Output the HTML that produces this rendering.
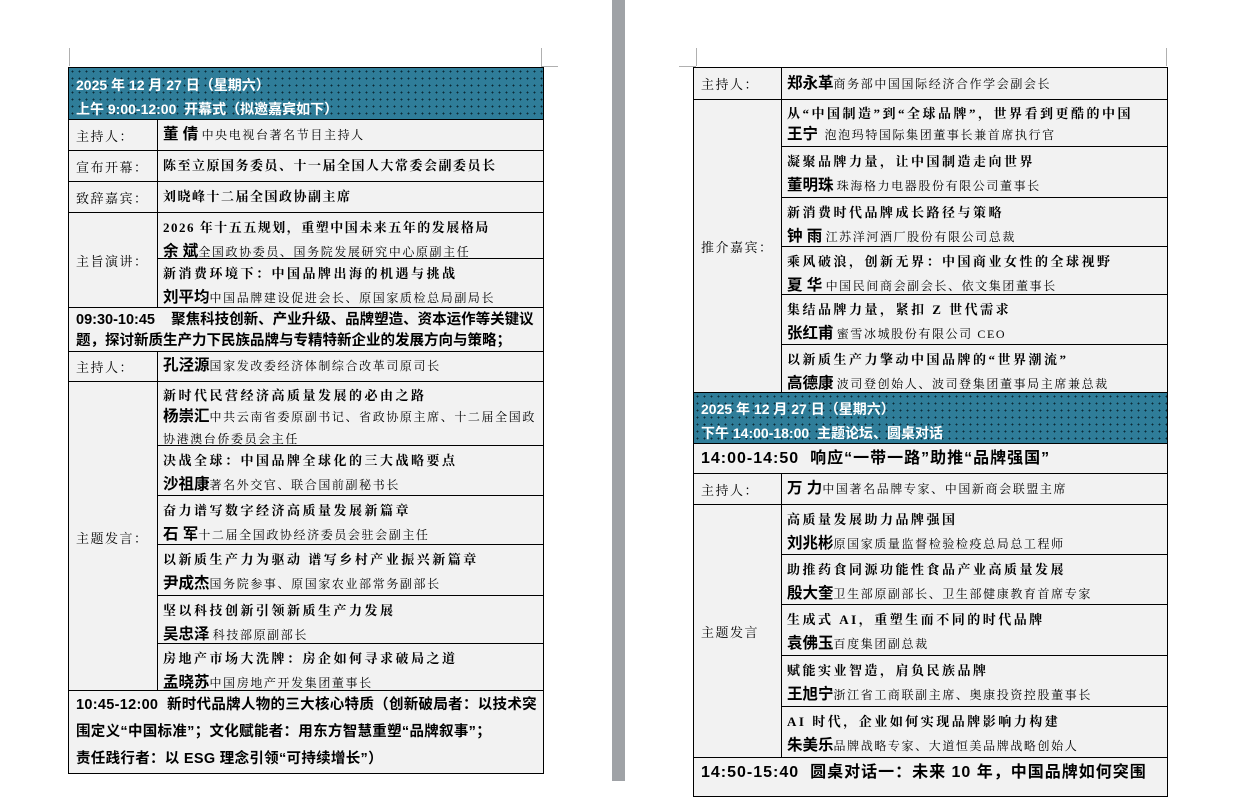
<!DOCTYPE html>
<html><head><meta charset="utf-8"><style>
body{margin:0;width:1239px;height:781px;background:#fff;position:relative;overflow:hidden;font-family:"Liberation Serif","Noto Serif CJK SC",serif;color:#000}
.c{position:absolute;box-sizing:border-box;border:1px solid #000;background:#f2f2f2;}
.h{background-color:#2f7d99;background-image:radial-gradient(circle,#0b2a36 0.8px,transparent 1px);background-size:7px 7px;color:#fff;font-family:"Liberation Sans","Noto Sans CJK SC",sans-serif;font-weight:bold;font-size:14px;padding:5px 0 0 7px;line-height:24px}
.lab{font-size:13px;padding-left:7px;display:flex;align-items:center;letter-spacing:1.5px}
.ct{padding:3px 0 0 5px;font-size:13px;line-height:24px;white-space:nowrap}
.t{font-weight:bold;letter-spacing:2.5px}
.t2{font-weight:bold;letter-spacing:1.5px}
.n{font-weight:bold;font-size:15.5px;font-family:"Liberation Sans","Noto Sans CJK SC",sans-serif}
.d{font-size:12px;letter-spacing:1.6px}
.big{font-family:"Liberation Sans","Noto Sans CJK SC",sans-serif;font-weight:bold;font-size:14.5px;padding:4px 0 0 7px;line-height:24px;white-space:nowrap}
.gap{position:absolute;left:612px;top:0;width:13px;height:781px;background:#9fa2a6}
.mk{position:absolute;background:#b0b0b0}
</style></head><body>
<div class="gap"></div>
<div class="mk" style="left:541px;top:48px;width:1px;height:18px"></div>
<div class="mk" style="left:541px;top:66px;width:17px;height:1px"></div>
<div class="mk" style="left:69px;top:48px;width:1px;height:18px"></div>
<div class="mk" style="left:696px;top:48px;width:1px;height:18px"></div>
<div class="mk" style="left:679px;top:66px;width:17px;height:1px"></div>
<div class="mk" style="left:1166px;top:48px;width:1px;height:18px"></div>

<!-- LEFT PAGE -->
<div class="c h" style="left:68px;top:67px;width:476px;height:53px">2025 年 12 月 27 日（星期六）<br>上午 9:00-12:00&nbsp; 开幕式（拟邀嘉宾如下）</div>
<div class="c lab" style="left:68px;top:119px;width:90px;height:32px">主持人：</div>
<div class="c ct" style="left:157px;top:119px;width:387px;height:32px;padding-top:4px;line-height:22px"><span class="n">董 倩</span> <span class="d">中央电视台著名节目主持人</span></div>
<div class="c lab" style="left:68px;top:150px;width:90px;height:32px">宣布开幕：</div>
<div class="c ct" style="left:157px;top:150px;width:387px;height:32px;padding-top:4px;line-height:22px"><span class="t2">陈至立原国务委员、十一届全国人大常委会副委员长</span></div>
<div class="c lab" style="left:68px;top:181px;width:90px;height:32px">致辞嘉宾：</div>
<div class="c ct" style="left:157px;top:181px;width:387px;height:32px;padding-top:4px;line-height:22px"><span class="t2">刘晓峰十二届全国政协副主席</span></div>
<div class="c lab" style="left:68px;top:212px;width:90px;height:96px">主旨演讲：</div>
<div class="c ct" style="left:157px;top:212px;width:387px;height:47px"><span class="t2">2026 年十五五规划，重塑中国未来五年的发展格局</span><br><span class="n">余 斌</span><span class="d">全国政协委员、国务院发展研究中心原副主任</span></div>
<div class="c ct" style="left:157px;top:258px;width:387px;height:50px"><span class="t">新消费环境下：中国品牌出海的机遇与挑战</span><br><span class="n">刘平均</span><span class="d">中国品牌建设促进会长、原国家质检总局副局长</span></div>
<div class="c big" style="left:68px;top:307px;width:476px;height:45px;line-height:21px;padding-top:2px;letter-spacing:0">09:30-10:45&nbsp;&nbsp;&nbsp; 聚焦科技创新、产业升级、品牌塑造、资本运作等关键议<br>题，探讨新质生产力下民族品牌与专精特新企业的发展方向与策略；</div>
<div class="c lab" style="left:68px;top:351px;width:90px;height:31px">主持人：</div>
<div class="c ct" style="left:157px;top:351px;width:387px;height:31px;padding-top:3px;line-height:22px"><span class="n">孔泾源</span><span class="d">国家发改委经济体制综合改革司原司长</span></div>
<div class="c lab" style="left:68px;top:381px;width:90px;height:310px;align-items:flex-start;padding-top:146px">主题发言：</div>
<div class="c ct" style="left:157px;top:381px;width:387px;height:65px;line-height:21px;white-space:normal"><span class="t">新时代民营经济高质量发展的必由之路</span><br><span class="n">杨崇汇</span><span class="d">中共云南省委原副书记、省政协原主席、十二届全国政协港澳台侨委员会主任</span></div>
<div class="c ct" style="left:157px;top:445px;width:387px;height:51px"><span class="t">决战全球：中国品牌全球化的三大战略要点</span><br><span class="n">沙祖康</span><span class="d">著名外交官、联合国前副秘书长</span></div>
<div class="c ct" style="left:157px;top:495px;width:387px;height:50px"><span class="t">奋力谱写数字经济高质量发展新篇章</span><br><span class="n">石 军</span><span class="d">十二届全国政协经济委员会驻会副主任</span></div>
<div class="c ct" style="left:157px;top:544px;width:387px;height:52px"><span class="t">以新质生产力为驱动 谱写乡村产业振兴新篇章</span><br><span class="n">尹成杰</span><span class="d">国务院参事、原国家农业部常务副部长</span></div>
<div class="c ct" style="left:157px;top:595px;width:387px;height:49px"><span class="t">坚以科技创新引领新质生产力发展</span><br><span class="n">吴忠泽</span> <span class="d">科技部原副部长</span></div>
<div class="c ct" style="left:157px;top:643px;width:387px;height:48px"><span class="t">房地产市场大洗牌：房企如何寻求破局之道</span><br><span class="n">孟晓苏</span><span class="d">中国房地产开发集团董事长</span></div>
<div class="c big" style="left:68px;top:690px;width:476px;height:84px;line-height:27px;padding-top:1px;letter-spacing:0.3px">10:45-12:00&nbsp; 新时代品牌人物的三大核心特质（创新破局者：以技术突<br>围定义“中国标准”；文化赋能者：用东方智慧重塑“品牌叙事”；<br>责任践行者：以 ESG 理念引领“可持续增长”）</div>

<!-- RIGHT PAGE -->
<div class="c lab" style="left:693px;top:67px;width:89px;height:33px">主持人：</div>
<div class="c ct" style="left:781px;top:67px;width:387px;height:33px;padding-top:5px;line-height:22px"><span class="n">郑永革</span><span class="d">商务部中国国际经济合作学会副会长</span></div>
<div class="c lab" style="left:693px;top:99px;width:89px;height:294px">推介嘉宾：</div>
<div class="c ct" style="left:781px;top:99px;width:387px;height:48px;line-height:21px"><span class="t">从“中国制造”到“全球品牌”，世界看到更酷的中国</span><br><span class="n">王宁</span>&nbsp; <span class="d">泡泡玛特国际集团董事长兼首席执行官</span></div>
<div class="c ct" style="left:781px;top:146px;width:387px;height:52px"><span class="t">凝聚品牌力量，让中国制造走向世界</span><br><span class="n">董明珠</span> <span class="d">珠海格力电器股份有限公司董事长</span></div>
<div class="c ct" style="left:781px;top:197px;width:387px;height:50px"><span class="t">新消费时代品牌成长路径与策略</span><br><span class="n">钟 雨</span> <span class="d">江苏洋河酒厂股份有限公司总裁</span></div>
<div class="c ct" style="left:781px;top:246px;width:387px;height:49px"><span class="t">乘风破浪，创新无界：中国商业女性的全球视野</span><br><span class="n">夏 华</span> <span class="d">中国民间商会副会长、依文集团董事长</span></div>
<div class="c ct" style="left:781px;top:294px;width:387px;height:51px"><span class="t">集结品牌力量，紧扣 Z 世代需求</span><br><span class="n">张红甫</span> <span class="d">蜜雪冰城股份有限公司 CEO</span></div>
<div class="c ct" style="left:781px;top:344px;width:387px;height:49px"><span class="t">以新质生产力擎动中国品牌的“世界潮流”</span><br><span class="n">高德康</span> <span class="d">波司登创始人、波司登集团董事局主席兼总裁</span></div>
<div class="c h" style="left:693px;top:392px;width:475px;height:52px;padding-top:4px">2025 年 12 月 27 日（星期六）<br>下午 14:00-18:00&nbsp; 主题论坛、圆桌对话</div>
<div class="c big" style="left:693px;top:443px;width:475px;height:31px;font-size:16px;letter-spacing:1px;padding-top:3px">14:00-14:50&nbsp; 响应“一带一路”助推“品牌强国”</div>
<div class="c lab" style="left:693px;top:473px;width:89px;height:32px">主持人：</div>
<div class="c ct" style="left:781px;top:473px;width:387px;height:32px;padding-top:4px;line-height:22px"><span class="n">万 力</span><span class="d">中国著名品牌专家、中国新商会联盟主席</span></div>
<div class="c lab" style="left:693px;top:504px;width:89px;height:254px">主题发言</div>
<div class="c ct" style="left:781px;top:504px;width:387px;height:51px"><span class="t">高质量发展助力品牌强国</span><br><span class="n">刘兆彬</span><span class="d">原国家质量监督检验检疫总局总工程师</span></div>
<div class="c ct" style="left:781px;top:554px;width:387px;height:51px"><span class="t">助推药食同源功能性食品产业高质量发展</span><br><span class="n">殷大奎</span><span class="d">卫生部原副部长、卫生部健康教育首席专家</span></div>
<div class="c ct" style="left:781px;top:604px;width:387px;height:52px"><span class="t">生成式 AI，重塑生而不同的时代品牌</span><br><span class="n">袁佛玉</span><span class="d">百度集团副总裁</span></div>
<div class="c ct" style="left:781px;top:655px;width:387px;height:52px"><span class="t">赋能实业智造，肩负民族品牌</span><br><span class="n">王旭宁</span><span class="d">浙江省工商联副主席、奥康投资控股董事长</span></div>
<div class="c ct" style="left:781px;top:706px;width:387px;height:52px"><span class="t">AI 时代，企业如何实现品牌影响力构建</span><br><span class="n">朱美乐</span><span class="d">品牌战略专家、大道恒美品牌战略创始人</span></div>
<div class="c big" style="left:693px;top:757px;width:475px;height:40px;font-size:16px;letter-spacing:1px;padding-top:3px">14:50-15:40&nbsp; 圆桌对话一：未来 10 年，中国品牌如何突围</div>
</body></html>
